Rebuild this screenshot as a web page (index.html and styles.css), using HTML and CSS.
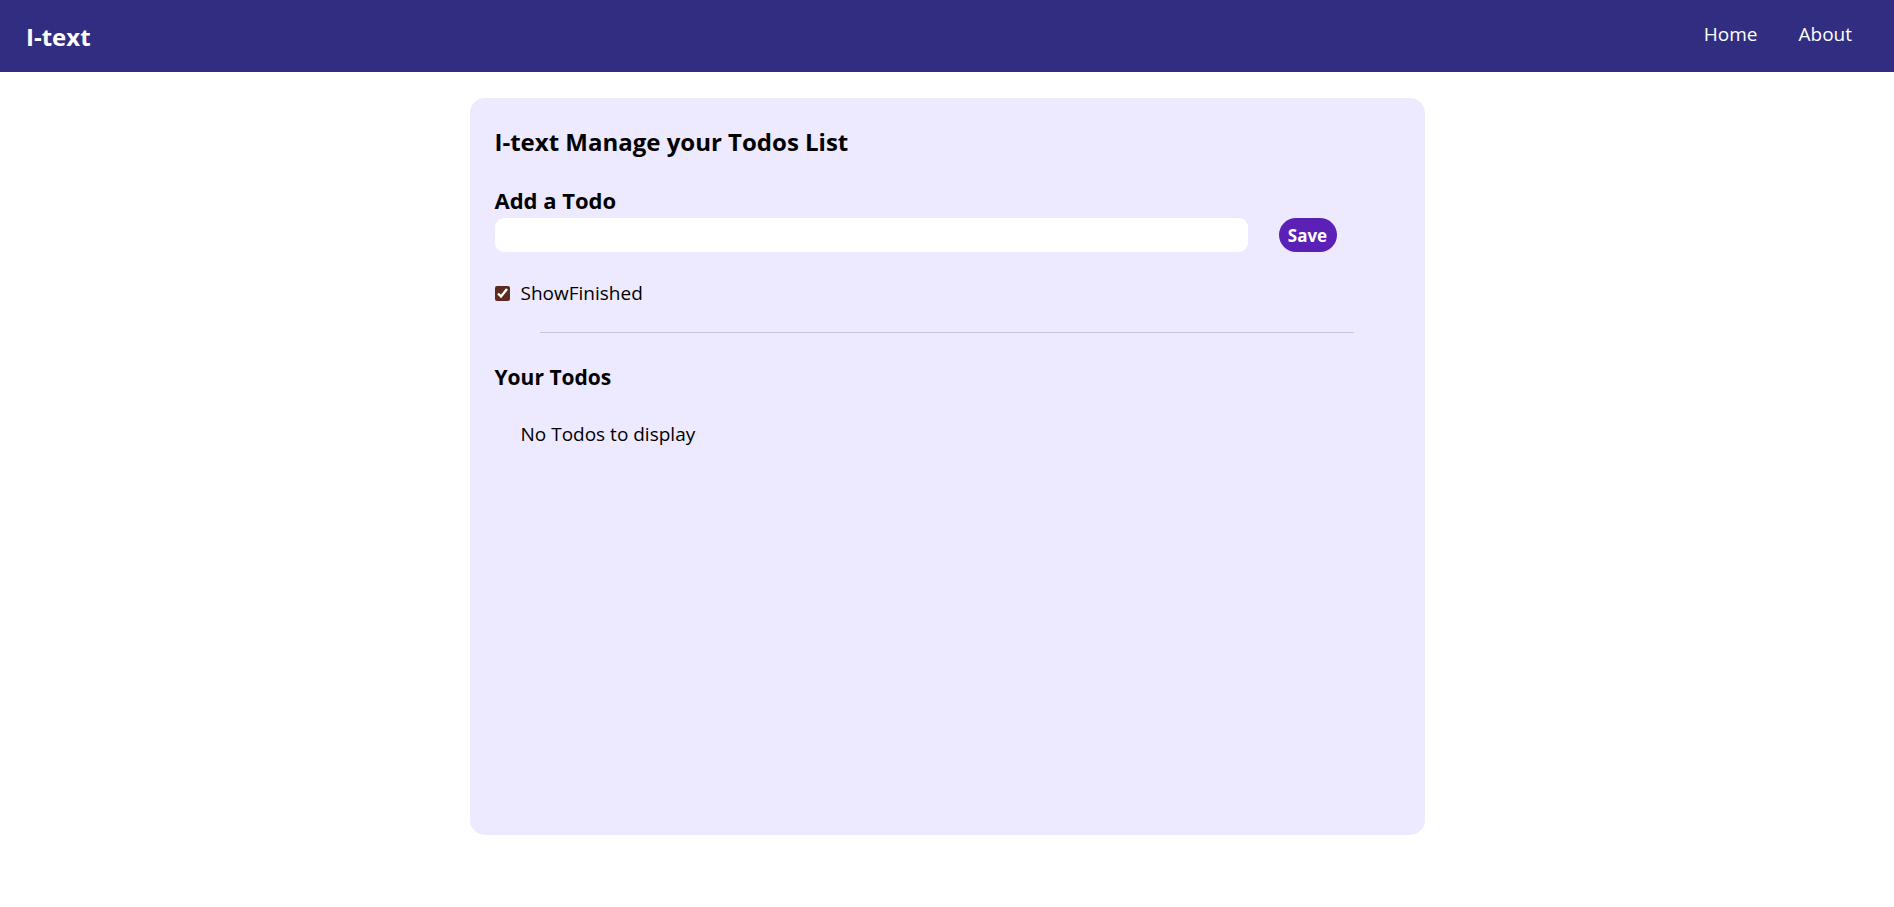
FILE: index.html
```html
<!DOCTYPE html>
<html lang="en">
<head>
<meta charset="UTF-8">
<title>I-text</title>
<link rel="stylesheet" href="styles.css">
</head>
<body>
<nav class="navbar">
  <span class="logo">I-text</span>
  <ul class="nav-links">
    <li>Home</li>
    <li>About</li>
  </ul>
</nav>
<main class="container">
  <h1 class="title">I-text Manage your Todos List</h1>
  <h2 class="section-title add-title">Add a Todo</h2>
  <div class="add-row">
    <input class="todo-input" type="text">
    <button class="save-btn">Save</button>
  </div>
  <label class="show-finished">
    <input type="checkbox" checked class="check">
    <span>ShowFinished</span>
  </label>
  <div class="divider"></div>
  <h2 class="section-title todos-title">Your Todos</h2>
  <div class="empty">No Todos to display</div>
</main>
</body>
</html>
```
FILE: styles.css
```css
* { box-sizing: border-box; }
body {
  margin: 0;
  font-family: "Open Sans", "Noto Sans", sans-serif;
  color: #000;
  background: #fff;
}
.navbar {
  height: 72px;
  background: #312e81;
  color: #fff;
  display: flex;
  align-items: center;
  justify-content: space-between;
  padding: 0 42px 0 26px;
}
.logo {
  font-weight: 700;
  font-size: 24px;
  line-height: 33px;
}
.nav-links {
  list-style: none;
  margin: 0;
  padding: 0 0 5px 0;
  display: flex;
  gap: 41px;
  font-size: 19px;
  line-height: 26px;
}
.container {
  width: 955px;
  height: 737px;
  margin: 26px auto 0;
  background: #ede9fe;
  border-radius: 15px;
  padding: 28px 25px;
  display: flex;
  flex-direction: column;
}
.title {
  margin: 0;
  font-size: 24px;
  line-height: 32px;
  font-weight: 700;
}
.section-title {
  margin: 0;
  font-size: 22px;
  line-height: 30px;
  font-weight: 700;
}
.add-title { margin-top: 27px; }
.add-row {
  display: flex;
  align-items: center;
  gap: 31px;
  margin-top: 3px;
}
.todo-input {
  width: 753px;
  height: 34px;
  border: none;
  border-radius: 9px;
  background: #fff;
  outline: none;
  padding: 0 10px;
  font: inherit;
}
.save-btn {
  height: 34px;
  width: 58px;
  border: none;
  border-radius: 17px;
  background: #5b21b6;
  color: #fff;
  font-family: inherit;
  font-weight: 700;
  font-size: 17px;
  padding: 0;
}
.show-finished {
  margin-top: 28px;
  display: flex;
  align-items: center;
  gap: 11px;
  font-size: 19px;
  line-height: 26px;
}
.check {
  margin: 0;
  width: 15px;
  height: 15px;
  accent-color: #5c2a1e;
}
.divider {
  height: 1px;
  width: 814px;
  align-self: center;
  background: #c9c5d6;
  margin-top: 26px;
}
.todos-title {
  margin-top: 29px;
  font-size: 21px;
}
.empty {
  margin-top: 29px;
  padding-left: 26px;
  font-size: 19px;
  line-height: 26px;
}
```
